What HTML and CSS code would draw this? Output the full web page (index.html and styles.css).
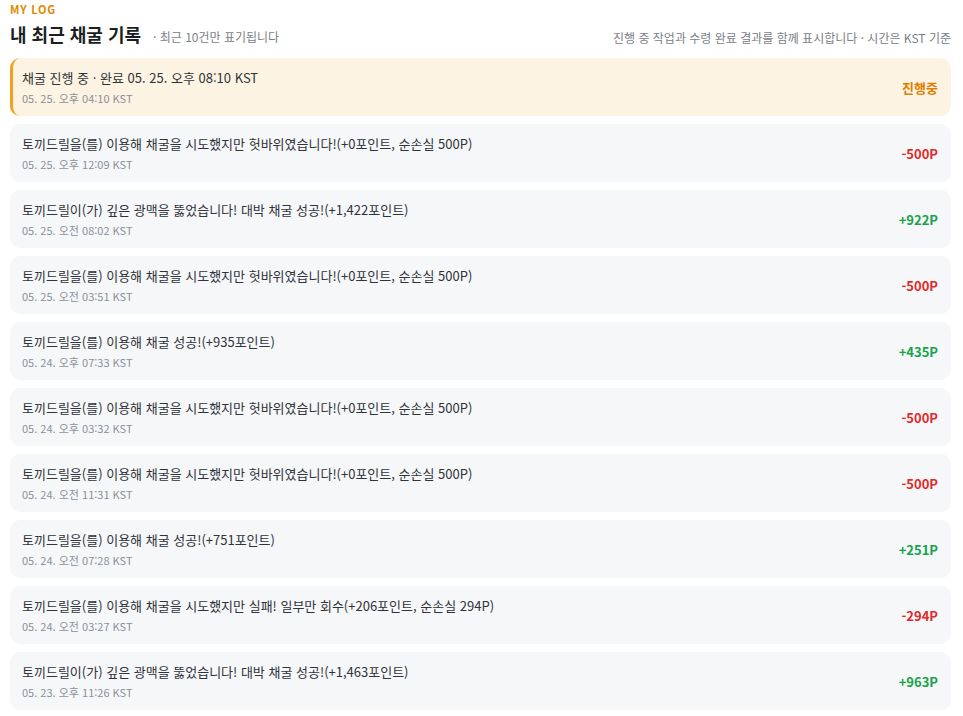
FILE: index.html
```html
<!DOCTYPE html>
<html lang="ko">
<head>
  <meta charset="UTF-8" />
  <meta name="viewport" content="width=device-width, initial-scale=1.0"/>
  <title>내 최근 채굴 기록</title>
  <link rel="stylesheet" href="styles.css">
</head>
<body>
  <div class="log">
    <div class="eyebrow">MY LOG</div>
    <div class="log-head">
      <div class="log-title">
        <h2>내 최근 채굴 기록</h2>
        <span class="sub">· 최근 10건만 표기됩니다</span>
      </div>
      <div class="hint">진행 중 작업과 수령 완료 결과를 함께 표시합니다 · 시간은 KST 기준</div>
    </div>

    <ul class="log-list">
      <li class="item pending">
        <div class="info">
          <div class="msg">채굴 진행 중 · 완료 05. 25. 오후 08:10 KST</div>
          <div class="time">05. 25. 오후 04:10 KST</div>
        </div>
        <div class="amount wait">진행중</div>
      </li>
      <li class="item">
        <div class="info">
          <div class="msg">토끼드릴을(를) 이용해 채굴을 시도했지만 헛바위였습니다!(+0포인트, 순손실 500P)</div>
          <div class="time">05. 25. 오후 12:09 KST</div>
        </div>
        <div class="amount minus">-500P</div>
      </li>
      <li class="item">
        <div class="info">
          <div class="msg">토끼드릴이(가) 깊은 광맥을 뚫었습니다! 대박 채굴 성공!(+1,422포인트)</div>
          <div class="time">05. 25. 오전 08:02 KST</div>
        </div>
        <div class="amount plus">+922P</div>
      </li>
      <li class="item">
        <div class="info">
          <div class="msg">토끼드릴을(를) 이용해 채굴을 시도했지만 헛바위였습니다!(+0포인트, 순손실 500P)</div>
          <div class="time">05. 25. 오전 03:51 KST</div>
        </div>
        <div class="amount minus">-500P</div>
      </li>
      <li class="item">
        <div class="info">
          <div class="msg">토끼드릴을(를) 이용해 채굴 성공!(+935포인트)</div>
          <div class="time">05. 24. 오후 07:33 KST</div>
        </div>
        <div class="amount plus">+435P</div>
      </li>
      <li class="item">
        <div class="info">
          <div class="msg">토끼드릴을(를) 이용해 채굴을 시도했지만 헛바위였습니다!(+0포인트, 순손실 500P)</div>
          <div class="time">05. 24. 오후 03:32 KST</div>
        </div>
        <div class="amount minus">-500P</div>
      </li>
      <li class="item">
        <div class="info">
          <div class="msg">토끼드릴을(를) 이용해 채굴을 시도했지만 헛바위였습니다!(+0포인트, 순손실 500P)</div>
          <div class="time">05. 24. 오전 11:31 KST</div>
        </div>
        <div class="amount minus">-500P</div>
      </li>
      <li class="item">
        <div class="info">
          <div class="msg">토끼드릴을(를) 이용해 채굴 성공!(+751포인트)</div>
          <div class="time">05. 24. 오전 07:28 KST</div>
        </div>
        <div class="amount plus">+251P</div>
      </li>
      <li class="item">
        <div class="info">
          <div class="msg">토끼드릴을(를) 이용해 채굴을 시도했지만 실패! 일부만 회수(+206포인트, 순손실 294P)</div>
          <div class="time">05. 24. 오전 03:27 KST</div>
        </div>
        <div class="amount minus">-294P</div>
      </li>
      <li class="item">
        <div class="info">
          <div class="msg">토끼드릴이(가) 깊은 광맥을 뚫었습니다! 대박 채굴 성공!(+1,463포인트)</div>
          <div class="time">05. 23. 오후 11:26 KST</div>
        </div>
        <div class="amount plus">+963P</div>
      </li>
    </ul>
  </div>
</body>
</html>
```

FILE: styles.css
```css
* { margin: 0; padding: 0; box-sizing: border-box; }
body { background: #fff; color: #222; font-family: "Noto Sans CJK KR", "Noto Sans", sans-serif; }
.log { padding: 1px 12px 0 10px; }

.eyebrow { font-size: 11px; font-weight: 700; letter-spacing: 0.8px; color: #e08a00; line-height: 16px; }
.log-head { display: flex; justify-content: space-between; align-items: flex-start; margin-top: 5px; }
.log-title { display: flex; align-items: baseline; gap: 12px; }
.log-title h2 { font-size: 18px; font-weight: 700; color: #1b1f24; line-height: 24px; }
.sub { font-size: 12px; color: #7b8088; }
.hint { font-size: 12px; color: #7b8088; line-height: 18px; margin-top: 7px; }

/* 기록 카드 */
.log-list { list-style: none; display: flex; flex-direction: column; gap: 8px; margin-top: 11px; }
.item { display: flex; align-items: center; justify-content: space-between; height: 58px; padding: 0 13px 0 12px; background: #f6f7f9; border-radius: 10px; }
.item.pending { background: #fdf3e2; border-left: 3px solid #f2a01d; padding-left: 9px; }
.msg { font-size: 13px; color: #2f333a; line-height: 20px; }
.time { font-size: 11px; color: #8a9099; line-height: 16px; margin-top: 2px; }
.amount { font-size: 13px; font-weight: 700; }
.amount.wait { color: #e07d00; }
.amount.minus { color: #e02b2b; }
.amount.plus { color: #17a34a; }
```
